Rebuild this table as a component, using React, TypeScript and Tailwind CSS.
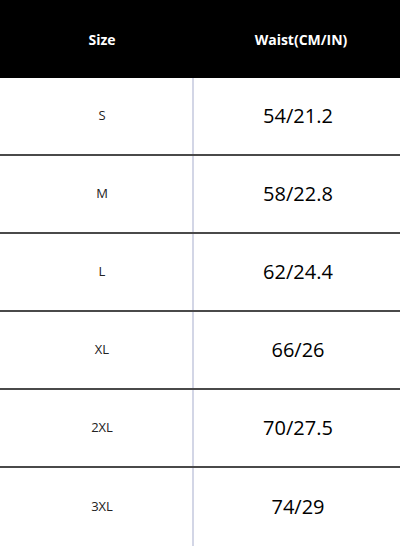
import React from "react";

const rows = [
  ["S", "54/21.2"],
  ["M", "58/22.8"],
  ["L", "62/24.4"],
  ["XL", "66/26"],
  ["2XL", "70/27.5"],
  ["3XL", "74/29"],
];

export default function App() {
  return (
    <div
      className="w-[400px] h-[547px] bg-white overflow-hidden"
      style={{ fontFamily: '"Open Sans", "Noto Sans", sans-serif' }}
    >
      <div className="grid grid-cols-[192px_208px] h-[78px] bg-black text-white font-bold text-[14px]">
        <div className="flex items-center justify-center pl-[12px]">Size</div>
        <div className="flex items-center justify-center pl-[10px]">Waist(CM/IN)</div>
      </div>
      {rows.map(([s, w], i) => (
        <div
          key={s}
          className={`grid grid-cols-[192px_2px_206px] h-[78px] ${
            i < rows.length - 1 ? "border-b-2 border-[#4a4a4a]" : ""
          }`}
        >
          <div className="flex items-center justify-center pl-[12px] text-[13px] text-[#222]">
            {s}
          </div>
          <div className="bg-[#d3d6e6]" />
          <div className="flex items-center justify-center pl-[2px] text-[20px] text-black">
            {w}
          </div>
        </div>
      ))}
    </div>
  );
}
